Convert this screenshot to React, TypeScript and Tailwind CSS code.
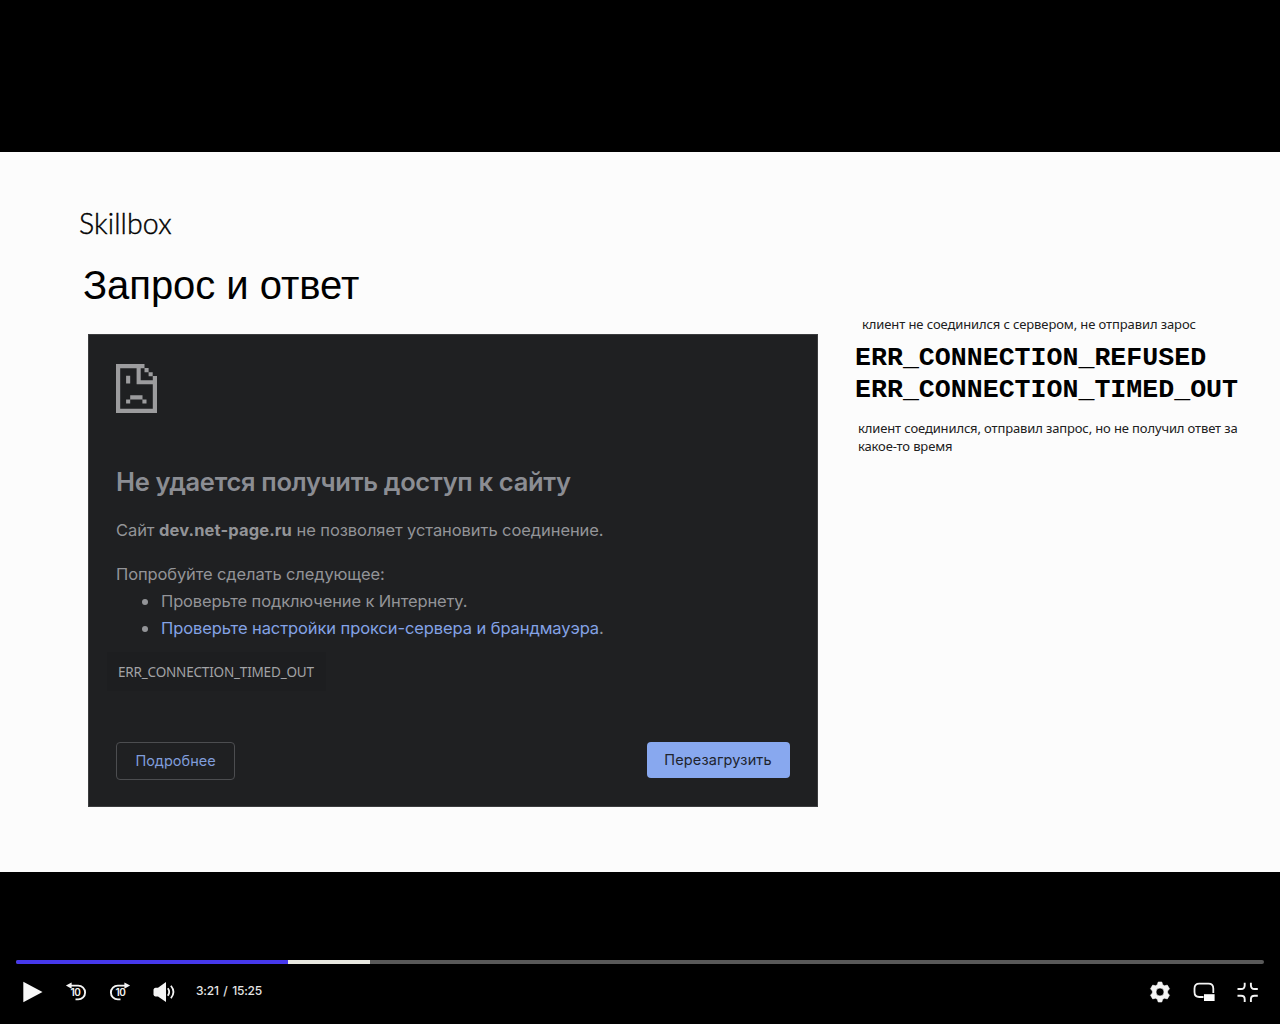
import React from "react";

function SadFile() {
  return (
    <svg className="block h-[49px] w-[41px]" viewBox="0 0 41 49" fill="#9c9c9e">
      <path d="M0 0H28.5V4.2H4.2V44.8H36.8V20.3H20.6V4H24.7V16.2H36.8V12H41V49H0Z" />
      <path d="M28.5 4.1h4.1v4.1h-4.1zM32.6 8.2h4.1v4.1h-4.1zM10.1 11.7h4.1v7.9h-4.1zM14.2 31.3h12.3v4.1H14.2zM10.1 35.4h4.1v4.1h-4.1zM26.4 35.4h4.1v4.1h-4.1z" />
    </svg>
  );
}

function Seek({ forward = false }: { forward?: boolean }) {
  return (
    <svg className="block h-6 w-6" viewBox="0 0 24 24" fill="none">
      <g transform={forward ? "translate(24 0) scale(-1 1)" : undefined}>
        <path d="M5 5.6H14.2A6.9 6.9 0 0 1 14.2 19.4H11.5" stroke="#f4f4f4" strokeWidth="1.9" />
        <path d="M1.9 5.6 7.6 2.5V8.7Z" fill="#f4f4f4" />
      </g>
      <text x={forward ? 12.4 : 11.4} y="16.2" textAnchor="middle" fill="#f4f4f4" fontFamily="Inter, sans-serif" fontWeight="600" fontSize="10" letterSpacing="-0.4">10</text>
    </svg>
  );
}

function ErrorCard() {
  return (
    <div className="flex h-[473px] w-[730px] flex-col border border-[#3b3c3e] bg-[#1f2022] px-[27px] pt-[29px] font-['Inter',sans-serif] text-[#939498]">
      <SadFile />
      <h2 className="mt-[51px] h-[36px] whitespace-nowrap text-[25.5px] font-semibold leading-[36px] tracking-[-0.31px] text-[#8b8d93]">Не удается получить доступ к сайту</h2>
      <p className="mt-[18px] h-[24px] whitespace-nowrap text-[16.5px] leading-[24px] tracking-[-0.08px]">
        Сайт <b className="font-bold tracking-[0.12px]">dev.net-page.ru</b> не позволяет установить соединение.
      </p>
      <p className="mt-[20px] h-[24px] whitespace-nowrap text-[16.5px] leading-[24px] tracking-[-0.12px]">Попробуйте сделать следующее:</p>
      <ul className="mt-[2px] text-[16.5px] leading-[27px]">
        <li className="flex items-center whitespace-nowrap">
          <span className="ml-[26px] mr-[13px] h-[6px] w-[6px] rounded-full bg-[#939498]" />
          <span className="tracking-[-0.13px]">Проверьте подключение к Интернету.</span>
        </li>
        <li className="flex items-center whitespace-nowrap">
          <span className="ml-[26px] mr-[13px] h-[6px] w-[6px] rounded-full bg-[#939498]" />
          <span className="tracking-[-0.09px]"><a className="text-[#84a3e6]">Проверьте настройки прокси-сервера и брандмауэра</a>.</span>
        </li>
      </ul>
      <div className="-ml-[9px] mt-[10px] flex h-[39px] w-[219px] items-center bg-[#1d1e20] pl-[11px] pt-[2px] font-['Noto_Sans',sans-serif] text-[13.5px] tracking-[-0.18px] text-[#a2a3a6]">ERR_CONNECTION_TIMED_OUT</div>
      <div className="mt-[51px] flex items-start justify-between text-[14.5px]">
        <button className="h-[38px] w-[119px] rounded-[4px] border border-[#4c4d50] text-[#809ddb]">Подробнее</button>
        <button className="h-[36px] w-[143px] rounded-[4px] bg-[#88a8ef] pr-px tracking-[0.13px] text-[#20242e]">Перезагрузить</button>
      </div>
    </div>
  );
}

function Slide() {
  return (
    <main className="flex h-[720px] bg-[#fcfcfc] text-black">
      <section className="w-[818px] pl-[79px] pt-[53px]">
        <div className="h-[36px] whitespace-nowrap font-['Lato',sans-serif] text-[28.5px] font-light leading-[36px] tracking-[0.1px] text-black [-webkit-text-stroke:0.4px_#000]">Skillbox</div>
        <h1 className="ml-[4px] mt-[20px] h-[48px] whitespace-nowrap font-['Liberation_Sans',sans-serif] text-[40px] leading-[48px] tracking-[-0.05px]">Запрос и ответ</h1>
        <div className="ml-[9px] mt-[25px]">
          <ErrorCard />
        </div>
      </section>
      <aside className="ml-[37px] pt-[163px] font-['Noto_Sans',sans-serif] text-[13px] leading-[18px] text-[#202020]">
        <p className="ml-[7px] whitespace-nowrap tracking-[-0.1px]">клиент не соединился с сервером, не отправил зарос</p>
        <div className="mt-[9px] whitespace-nowrap font-['Liberation_Mono',monospace] text-[26.6px] font-bold leading-[32px] text-black">
          <p>ERR_CONNECTION_REFUSED</p>
          <p>ERR_CONNECTION_TIMED_OUT</p>
        </div>
        <p className="ml-[3px] mt-[13px] whitespace-nowrap tracking-[-0.13px]">
          клиент соединился, отправил запрос, но не получил ответ за
          <br />
          какое-то время
        </p>
      </aside>
    </main>
  );
}

function Controls() {
  return (
    <footer className="px-4 pt-[88px]">
      <div className="flex h-1 overflow-hidden rounded-full bg-[#595959]">
        <div className="w-[272px] bg-[#4638ec]" />
        <div className="w-[82px] bg-[#e8e8e0]" />
      </div>
      <div className="mt-[16px] flex h-6 items-center justify-between">
        <div className="flex items-center">
          <svg className="ml-[5px] block h-6 w-6" viewBox="0 0 24 24" fill="#f8f8f8"><path d="M2.3 1.8V22.2L21.5 12Z" /></svg>
          <div className="ml-[19px]"><Seek /></div>
          <div className="ml-[20px]"><Seek forward /></div>
          <svg className="ml-[20px] block h-6 w-6" viewBox="0 0 24 24" fill="none">
            <path d="M1.5 9.5Q2 7.8 3.5 7.8H6L14 2V22L6 16.5H3.5Q2 16.5 1.5 14.8Z" fill="#f4f4f4" />
            <path d="M15.8 8.3Q18.6 12 15.8 15.8M18.9 5.8Q24 12 18.9 18.2" stroke="#f4f4f4" strokeWidth="1.8" />
          </svg>
          <span className="ml-[20px] -mt-[2px] whitespace-nowrap font-['Inter',sans-serif] text-[12px] font-medium tracking-[-0.2px] text-[#e5e5e5] [word-spacing:1.6px]">3:21 / 15:25</span>
        </div>
        <div className="mr-[4px] flex items-center gap-5">
          <svg className="block h-6 w-6" viewBox="0 0 24 24" fill="#f4f4f4" stroke="#f4f4f4" strokeWidth="0.6" strokeLinejoin="round">
            <path fillRule="evenodd" d="M10.2 2h3.6l.9 2.8 1.8 1 2.8-.7 2.2 3.7-1.9 2.2v2l1.9 2.2-2.2 3.7-2.8-.7-1.8 1-.9 2.8h-3.6l-.9-2.8-1.8-1-2.8.7-2.2-3.7L4.4 13v-2L2.5 8.8l2.2-3.7 2.8.7 1.8-1ZM12 8a4 4 0 1 0 0 8 4 4 0 0 0 0-8Z" />
          </svg>
          <svg className="block h-6 w-6" viewBox="0 0 24 24" fill="none">
            <path d="M21.3 13V8.5Q21.3 3.7 16.5 3.7H7.3Q2.5 3.7 2.5 8.5V12Q2.5 17 7.3 17H11.5" stroke="#f4f4f4" strokeWidth="1.8" />
            <path d="M12 14.2H22.6V21H12Z" fill="#fff" />
          </svg>
          <svg className="block h-6 w-6" viewBox="0 0 24 24" fill="none" stroke="#f4f4f4" strokeWidth="1.9">
            <path d="M8.7 2.8V5.2Q8.7 9 5 9H1.5M14.9 2.8V5.2Q14.9 9 18.6 9H21.8M8.7 22V19.2Q8.7 15.8 5 15.8H1.5M14.9 22V19.2Q14.9 15.8 18.6 15.8H21.8" />
          </svg>
        </div>
      </div>
    </footer>
  );
}

export default function App() {
  return (
    <div className="h-[1024px] w-[1280px] overflow-hidden bg-black pt-[152px]">
      <Slide />
      <Controls />
    </div>
  );
}
